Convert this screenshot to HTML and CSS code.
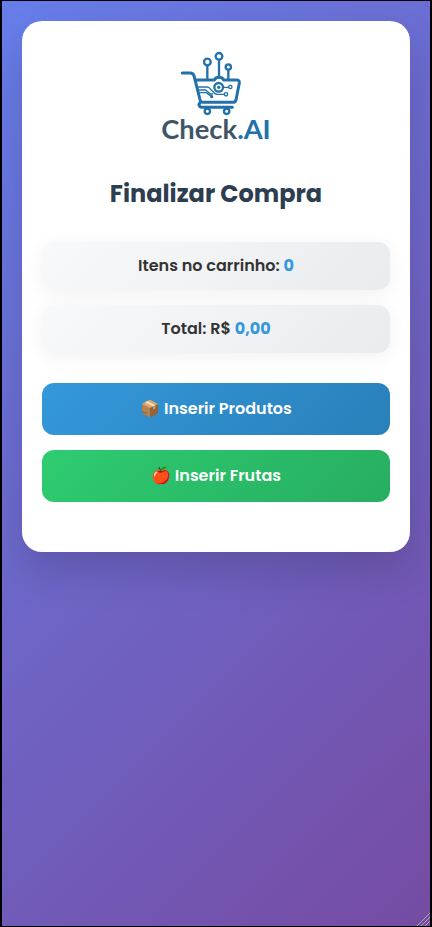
FILE: index.html
```html
<!DOCTYPE html>
<html lang="pt-BR">
<head>
<meta charset="utf-8">
<meta name="viewport" content="width=device-width, initial-scale=1">
<title>Finalizar Compra</title>
<link rel="stylesheet" href="styles.css">
</head>
<body>
<main class="card">
  <svg class="logo" viewBox="0 3 396 330" role="img" aria-label="Check.AI">
    <g class="cart">
      <path class="thick" d="M97 99H121Q129 99 132 107L151 183Q153 187 158 187H249Q256 187 258 180L268 129Q269 120 260 120H221Q217 112 207 112Q197 112 193 120H137"/>
      <path class="thick" d="M151 187Q144 193 149 199Q151 202 157 202H247"/>
      <path d="M172 77V118M207 60V111M235 91V118"/>
      <circle cx="172" cy="66" r="10"/>
      <circle cx="207" cy="49" r="10"/>
      <circle cx="235" cy="81" r="8"/>
      <circle cx="172" cy="214" r="8"/>
      <circle cx="230" cy="214" r="8"/>
      <circle cx="206" cy="142" r="13"/>
      <circle class="dot" cx="206" cy="142" r="5"/>
      <path class="trace" d="M220 142H236M142 141H171Q176 141 180 146L194 160Q197 163 202 163H222M145 150H167L181 162H188M148 158H169L183 169"/>
      <circle class="trace" cx="241" cy="141" r="5"/>
      <circle class="trace" cx="228" cy="163" r="5"/>
      <circle class="dot" cx="185" cy="170" r="5"/>
    </g>
    <text class="brand" x="198" y="296" text-anchor="middle">Check<tspan class="brand-accent">.AI</tspan></text>
  </svg>
  <h1>Finalizar Compra</h1>
  <section class="summary">
    <p class="info">Itens no carrinho: <span class="value">0</span></p>
    <p class="info">Total: R$ <span class="value">0,00</span></p>
  </section>
  <div class="actions">
    <button type="button" class="btn btn-products">📦 Inserir Produtos</button>
    <button type="button" class="btn btn-fruits">🍎 Inserir Frutas</button>
  </div>
</main>
<svg class="grip" viewBox="0 0 14 14" aria-hidden="true"><path d="M1 14L14 1M5 14L14 5M9 14L14 9"/></svg>
</body>
</html>
```
FILE: styles.css
```css
* {
  box-sizing: border-box;
  margin: 0;
}

body {
  min-height: 100vh;
  padding: 20px;
  border: 1px solid #000;
  border-width: 1px 2px;
  background: linear-gradient(135deg, #667eea 0%, #764ba2 100%) border-box;
  color: #333;
  font-family: Poppins, Inter, sans-serif;
}

.card {
  padding: 20px 20px 50px;
  border-radius: 20px;
  background: #fff;
  box-shadow: 0 20px 40px rgba(0, 0, 0, 0.15);
  text-align: center;
}

.logo {
  display: block;
  width: 132px;
  height: 110px;
  margin: 0 auto 25px;
}

.cart {
  fill: none;
  stroke: #2272a9;
  stroke-width: 7;
  stroke-linecap: round;
  stroke-linejoin: round;
}

.thick {
  stroke-width: 9;
}

.trace {
  stroke-width: 4;
}

.dot {
  fill: #2272a9;
  stroke: none;
}

.brand {
  fill: #3f5568;
  font-family: Lato, sans-serif;
  font-size: 82px;
  font-weight: 700;
}

.brand-accent {
  fill: #2272a9;
}

h1 {
  margin-bottom: 30px;
  color: #2c3e50;
  font-size: 24px;
  font-weight: 700;
  line-height: 36px;
}

.summary,
.actions {
  display: grid;
  gap: 15px;
}

.summary {
  margin-bottom: 30px;
}

.info {
  padding: 12px;
  border-radius: 12px;
  background: linear-gradient(135deg, #f8f9fa, #e9ecef);
  box-shadow: 0 4px 20px rgba(0, 0, 0, 0.06);
  font-size: 16px;
  font-weight: 600;
  line-height: 24px;
}

.value {
  color: #3498db;
  font-weight: 700;
}

.btn {
  padding: 14px;
  border: 0;
  border-radius: 12px;
  color: #fff;
  font: inherit;
  font-size: 16px;
  font-weight: 600;
  line-height: 24px;
  cursor: pointer;
}

.btn-products {
  background: linear-gradient(135deg, #3498db, #2980b9);
}

.btn-fruits {
  background: linear-gradient(135deg, #2ecc71, #27ae60);
}

.grip {
  position: absolute;
  right: 2px;
  bottom: 1px;
  width: 14px;
  height: 14px;
  fill: none;
  stroke: #aaa;
  stroke-width: 1;
}
```
